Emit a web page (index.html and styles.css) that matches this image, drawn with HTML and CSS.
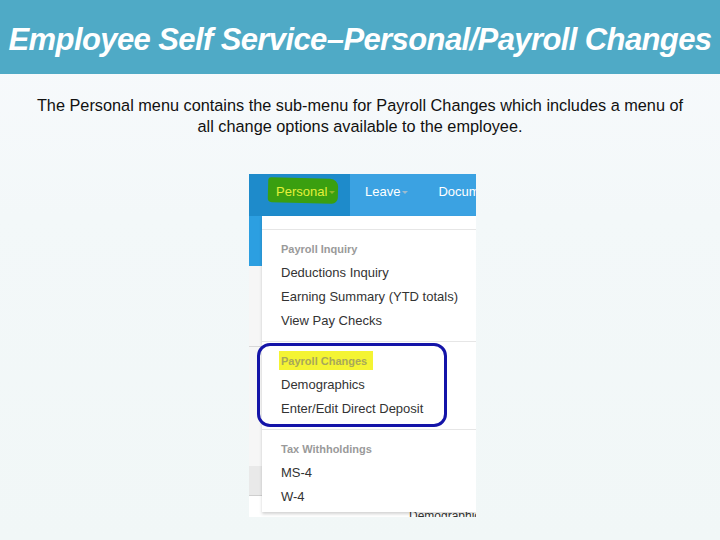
FILE: index.html
```html
<!DOCTYPE html>
<html lang="en">
<head>
<meta charset="utf-8">
<title>Employee Self Service</title>
<link rel="stylesheet" href="styles.css">
</head>
<body>
<header class="title-bar">
  <h1 class="title">Employee Self Service–Personal/Payroll Changes</h1>
</header>
<p class="intro">The Personal menu contains the sub-menu for Payroll Changes which includes a menu of all change options available to the employee.</p>

<div class="shot">
  <nav class="nav">
    <div class="nav-active">
      <span class="green-mark"></span>
      <span class="nav-link nav-link-active">Personal<span class="caret"></span></span>
    </div>
    <div class="nav-rest">
      <span class="nav-link">Leave<span class="caret"></span></span>
      <span class="nav-link nav-doc">Documents</span>
    </div>
  </nav>
  <div class="below">
    <div class="strip">
      <div class="strip-blue"></div>
      <div class="strip-gray"></div>
      <div class="strip-box"></div>
    </div>
    <div class="dropdown">
      <div class="dd-top"></div>
      <ul class="section">
        <li class="dd-header">Payroll Inquiry</li>
        <li class="dd-item">Deductions Inquiry</li>
        <li class="dd-item">Earning Summary (YTD totals)</li>
        <li class="dd-item">View Pay Checks</li>
      </ul>
      <ul class="section section-ring">
        <li class="dd-header"><span class="yellow">Payroll Changes</span></li>
        <li class="dd-item">Demographics</li>
        <li class="dd-item">Enter/Edit Direct Deposit</li>
        <li class="ring"></li>
      </ul>
      <ul class="section section-last">
        <li class="dd-header">Tax Withholdings</li>
        <li class="dd-item">MS-4</li>
        <li class="dd-item">W-4</li>
      </ul>
    </div>
  </div>
  <div class="under">
    <span class="tick"></span>
    <span class="under-text">Demographics</span>
  </div>
</div>
</body>
</html>
```

FILE: styles.css
```css
html, body {
  margin: 0;
  padding: 0;
}
body {
  width: 720px;
  height: 540px;
  overflow: hidden;
  background: linear-gradient(to bottom, #f8fafd 0%, #f3f8f9 40%, #f1f7f7 100%);
  font-family: "Liberation Sans", Arial, sans-serif;
}
.title-bar {
  height: 74px;
  background: #4faac6;
  display: flex;
  align-items: center;
  justify-content: center;
}
.title {
  margin: 0;
  padding-top: 6px;
  color: #ffffff;
  font-family: "Liberation Sans", Arial, sans-serif;
  font-style: italic;
  font-weight: bold;
  font-size: 31px;
  letter-spacing: -0.6px;
  white-space: nowrap;
}
.intro {
  width: 656px;
  margin: 21px auto 0;
  text-align: center;
  color: #111;
  font-family: "Liberation Sans", Arial, sans-serif;
  font-size: 16.3px;
  line-height: 21px;
}
.shot {
  width: 227px;
  height: 343px;
  margin: 37px 0 0 249px;
  overflow: hidden;
  background: #ffffff;
  position: relative;
  font-family: "Liberation Sans", Arial, sans-serif;
}
.nav {
  height: 42px;
  display: flex;
}
.nav-active {
  width: 101px;
  background: #1e8bcb;
  position: relative;
  display: flex;
  align-items: center;
  padding-left: 27px;
  box-sizing: border-box;
}
.nav-rest {
  flex: 1;
  background: #3ba2e2;
  display: flex;
  align-items: center;
  padding-left: 15px;
  gap: 30px;
  white-space: nowrap;
  overflow: hidden;
}
.nav-link {
  color: #ffffff;
  font-size: 13px;
  position: relative;
  top: -4px;
  white-space: nowrap;
}
.nav-link-active {
  color: #e4f03a;
}
.caret {
  display: inline-block;
  width: 0;
  height: 0;
  margin-left: 2px;
  vertical-align: middle;
  border-left: 3px solid transparent;
  border-right: 3px solid transparent;
  border-top: 3px solid rgba(200, 200, 200, 0.7);
}
.nav-link-active .caret {
  border-top-color: #8fb52a;
}
.green-mark {
  position: absolute;
  left: 19px;
  top: 4px;
  width: 70px;
  height: 25px;
  background: #3a9f10;
  border-radius: 3px 8px 6px 4px;
  transform: rotate(1.5deg);
}
.below {
  display: flex;
  height: 296px;
}
.strip {
  width: 13px;
  display: flex;
  flex-direction: column;
}
.strip-blue {
  height: 50px;
  background: #2c9fe1;
}
.strip-gray {
  height: 200px;
  background-image: linear-gradient(to bottom, #f6f6f6 80px, #d8d8d8 80px, #d8d8d8 81px, #f6f6f6 81px);
}
.strip-box {
  height: 29px;
  background: #e9e9e9;
  border-bottom: 1px solid #cfcfcf;
}
.dropdown {
  flex: 1;
  background: #ffffff;
  box-shadow: 0 2px 3px rgba(0, 0, 0, 0.18);
  height: 296px;
  position: relative;
  z-index: 1;
}
.dd-top {
  height: 13px;
  border-bottom: 1px solid #e6e6e6;
}
.section {
  list-style: none;
  margin: 0;
  padding: 7px 0 8px 19px;
  border-bottom: 1px solid #e6e6e6;
  position: relative;
}
.section-last {
  border-bottom: 0;
  padding-bottom: 2px;
}
.dd-header {
  height: 24px;
  line-height: 24px;
  font-size: 11px;
  font-weight: bold;
  color: #9a9a9a;
}
.dd-item {
  height: 24px;
  line-height: 24px;
  font-size: 13px;
  color: #333333;
  white-space: nowrap;
}
.yellow {
  background: #f4f433;
  color: #a8a85a;
  padding: 4px 6px 3px 2px;
  margin-left: -2px;
}
.ring {
  position: absolute;
  left: -5px;
  top: 1px;
  width: 184px;
  height: 78px;
  border: 3px solid #1414a8;
  border-radius: 13px;
}
.under {
  height: 5px;
  position: relative;
  display: flex;
  align-items: flex-end;
}
.tick {
  width: 1px;
  height: 5px;
  margin-left: 33px;
  background: #888;
}
.under-text {
  margin-left: 127px;
  font-size: 12px;
  line-height: 10px;
  color: #333;
  white-space: nowrap;
  position: relative;
  top: 4px;
}
```
